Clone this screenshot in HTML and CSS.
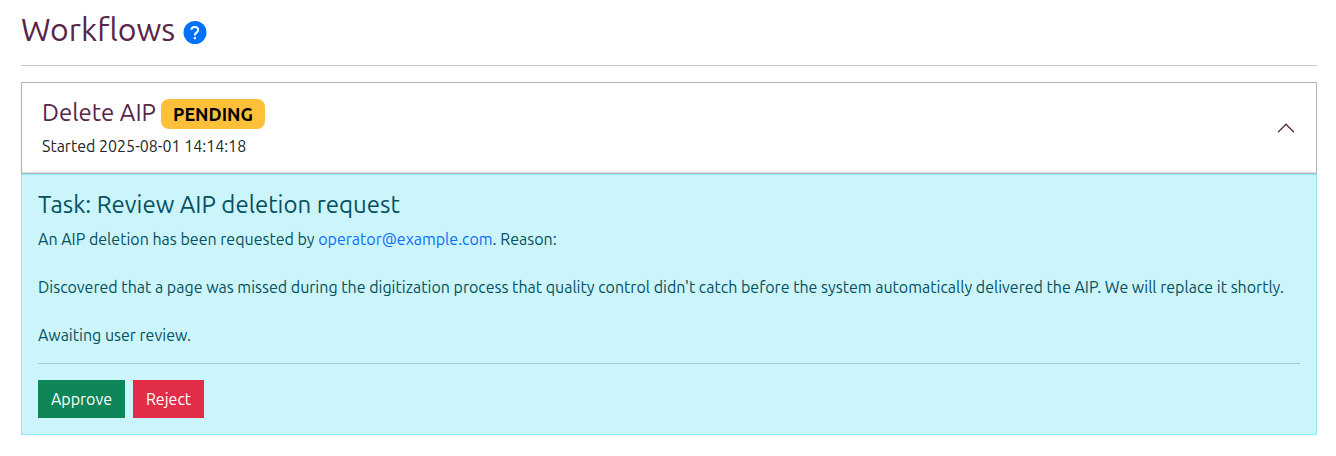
FILE: index.html
```html
<!DOCTYPE html>
<html lang="en">
<head>
<meta charset="utf-8">
<title>Workflows</title>
<link rel="stylesheet" href="styles.css">
</head>
<body>
<main class="page">
  <header class="page-header">
    <h1 class="page-title">Workflows</h1>
    <svg class="help" viewBox="0 0 23 23" aria-label="Help"><circle cx="11.500" cy="11.500" r="11.500" fill="#0072fa"/><path d="M7.800 8.800C7.900 6.900 9.300 5.900 11.300 5.900c2 0 3.400 1 3.400 2.800 0 1.400-.8 2.100-1.800 2.900-1 .8-1.500 1.300-1.500 2.500v.5" fill="none" stroke="#fff" stroke-width="2"/><rect x="10.200" y="16" width="2.400" height="2.300" rx=".8" fill="#fff"/></svg>
  </header>
  <section class="accordion">
    <div class="summary">
      <div>
        <div class="summary-row"><h2 class="heading name">Delete AIP</h2><span class="badge">PENDING</span></div>
        <p class="started">Started 2025-08-01 14:14:18</p>
      </div>
      <svg class="chevron" viewBox="0 0 16 16"><path fill="#572649" fill-rule="evenodd" d="M14.354 11.354a.5.5 0 0 1-.708 0L8 5.707l-5.646 5.647a.5.5 0 0 1-.708-.708l6-6a.5.5 0 0 1 .708 0l6 6a.5.5 0 0 1 0 .708"/></svg>
    </div>
    <div class="task">
      <h3 class="heading task-title">Task: Review AIP deletion request</h3>
      <p class="line request">An AIP deletion has been requested by <a class="link">operator@example.com</a>. Reason:</p>
      <p class="line reason">Discovered that a page was missed during the digitization process that quality control didn't catch before the system automatically delivered the AIP. We will replace it shortly.</p>
      <p class="line awaiting">Awaiting user review.</p>
      <div class="actions"><button class="btn approve">Approve</button><button class="btn reject">Reject</button></div>
    </div>
  </section>
</main>
</body>
</html>
```
FILE: styles.css
```css
* { box-sizing: border-box; }
body { margin: 0; background: #fff; color: #212529; font: 16px/24px Ubuntu, "Noto Sans", "Open Sans", sans-serif; }
h1, h2, h3, p { margin: 0; font-weight: 400; }
.page { padding: 10px 19px 0 21px; }
.page-header { display: flex; align-items: center; height: 56px; padding-bottom: 17px; border-bottom: 1px solid #c8c8c8; }
.page-title { font-size: 32px; line-height: 38px; color: #572649; width: 162px; white-space: nowrap; }
.help { width: 24px; height: 23px; margin-top: 6px; }
.accordion { margin-top: 16px; }
.summary { display: flex; align-items: center; justify-content: space-between; height: 92px; padding: 0 20px; border: 1px solid #adb5bd; box-shadow: inset 0 -1px 0 #dfdfdf; }
.summary-row { display: flex; align-items: center; gap: 5px; height: 30px; }
.heading { font-size: 24px; line-height: 29px; color: #572649; white-space: nowrap; }
.name { width: 114px; padding-bottom: 2px; }
.badge { width: 104px; height: 30px; border-radius: 8px; background: #ffc039; color: #000; font-size: 18px; line-height: 31px; font-weight: 700; text-align: center; }
.started { margin-top: 5px; white-space: nowrap; }
.chevron { width: 20px; height: 20px; }
.task { height: 261px; padding: 15px 16px; border: 1px solid #93eaf6; background: #cbf4fb; color: #055160; }
.task-title { color: #055160; }
.line { white-space: nowrap; }
.request { margin-top: 8px; }
.reason, .awaiting { margin-top: 24px; }
.link { color: #0d6efd; }
.actions { display: flex; gap: 8px; margin-top: 16px; padding-top: 16px; border-top: 1px solid #9bc7ce; }
.btn { height: 38px; border: 0; padding: 0; color: #fff; font: inherit; }
.approve { width: 87px; background: #0f8657; }
.reject { width: 71px; background: #e12d47; }
```
